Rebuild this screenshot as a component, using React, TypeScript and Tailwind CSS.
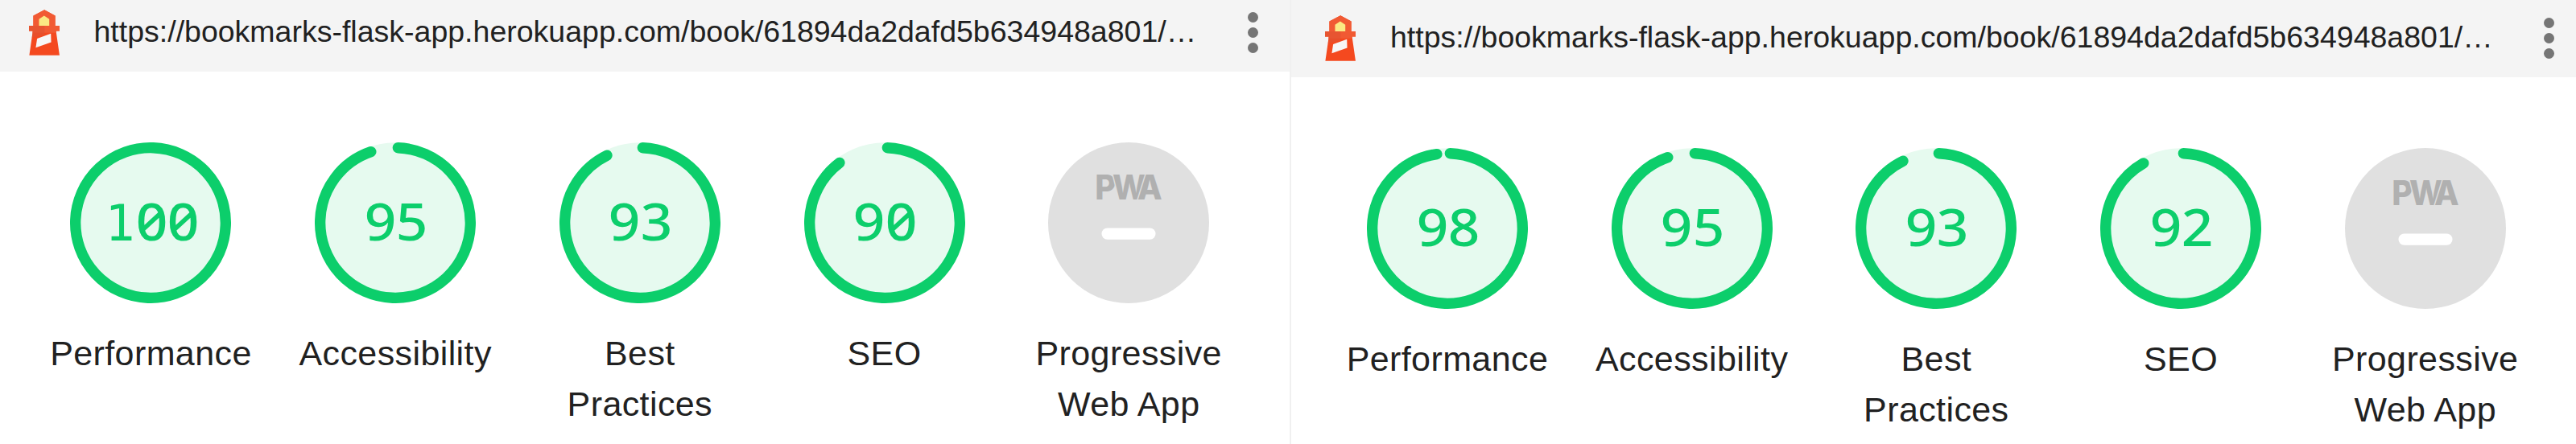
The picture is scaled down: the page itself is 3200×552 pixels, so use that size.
import React from "react";

type Gauge = { score: number | null; label: string[] };

const CIRCUMFERENCE = 2 * Math.PI * 56;

const LEFT: Gauge[] = [
  { score: 100, label: ["Performance"] },
  { score: 95, label: ["Accessibility"] },
  { score: 93, label: ["Best", "Practices"] },
  { score: 90, label: ["SEO"] },
  { score: null, label: ["Progressive", "Web App"] },
];

const RIGHT: Gauge[] = [
  { score: 98, label: ["Performance"] },
  { score: 95, label: ["Accessibility"] },
  { score: 93, label: ["Best", "Practices"] },
  { score: 92, label: ["SEO"] },
  { score: null, label: ["Progressive", "Web App"] },
];

function LighthouseIcon() {
  return (
    <svg viewBox="47 35 113 170" className="h-[57px] w-[38px] shrink-0">
      <path d="M104 36 63 57V95H47V114H61L48 204H160L147 114H160V95H144V57Z" fill="#f4491f" />
      <path d="M104 36 63 57V95H47V114H61L60 121H148L147 114H160V95H144V57Z" fill="#f15a33" />
      <path d="M47 95H104V130L58 139 61 114H47Z" fill="#e25230" opacity="0.7" />
      <path d="M84 70 103 57 122 70V95H84Z" fill="#fbe983" />
      <path d="M77 142 128 124 129 156 72 176Z" fill="#f7f7f7" />
    </svg>
  );
}

function ScoreDial({ score }: { score: number }) {
  const arc = score === 100 ? CIRCUMFERENCE : (score / 100) * CIRCUMFERENCE - 3.4;
  return (
    <div className="grid size-[200px] place-items-center">
      <svg viewBox="0 0 120 120" className="col-start-1 row-start-1 size-[200px]">
        <circle cx="60" cy="60" r="59.8" fill="#e6faef" />
        <circle
          cx="60"
          cy="60"
          r="56"
          fill="none"
          stroke="#0cce6b"
          strokeWidth="8"
          strokeLinecap="round"
          strokeDasharray={`${arc} ${CIRCUMFERENCE}`}
          transform="rotate(-87.95 60 60)"
        />
      </svg>
      <span className="col-start-1 row-start-1 mb-[4px] ml-[2px] flex h-[70px] items-baseline font-['Noto_Sans',sans-serif] text-[63px] leading-[70px] font-medium text-[#0cce6b] [font-feature-settings:'zero'_1]">
        {String(score)
          .split("")
          .map((digit, i) => (
            <span
              key={i}
              className={
                digit === "1"
                  ? "w-[39.4px] text-center font-['DejaVu_Sans_Mono',monospace] text-[61.5px] font-normal"
                  : "w-[39.4px] scale-x-110 text-center"
              }
            >
              {digit}
            </span>
          ))}
      </span>
    </div>
  );
}

function PwaDial() {
  return (
    <svg viewBox="0 0 200 200" className="size-[200px]">
      <circle cx="100" cy="100" r="100" fill="#e0e0e0" />
      <text
        x="56.5 79.5 112"
        y="71"
        className="font-['Inter',sans-serif] font-extrabold"
        fontSize="42"
        fill="#b0b0b0"
        stroke="#e0e0e0"
        strokeWidth="3"
        paintOrder="stroke"
        transform="translate(4.5 0) scale(0.95 1)"
      >
        PWA
      </text>
      <rect x="66.5" y="106.5" width="67" height="14.3" rx="7" fill="#fff" />
    </svg>
  );
}

function Report({ gauges, inset }: { gauges: Gauge[]; inset?: boolean }) {
  return (
    <div className={inset ? "pl-[6.5px]" : ""}>
      <header
        className={
          inset
            ? "-ml-[6.5px] flex h-[89px] items-start bg-[#f4f4f4] pt-[12px] pl-[42px]"
            : "flex h-[89px] items-start bg-[#f4f4f4] pt-[12px] pl-[35.5px]"
        }
      >
        <LighthouseIcon />
        <div className="ml-[43px] w-[1399px] pt-[5px] font-['Liberation_Sans',Arial,sans-serif] text-[37.5px] leading-[44px] whitespace-nowrap text-[#212121]">
          https://bookmarks-flask-app.herokuapp.com/book/61894da2dafd5b634948a801/…
        </div>
        <div className="ml-[34px] flex flex-col gap-[6px] pt-[2.5px]">
          <i className="size-[13px] rounded-full bg-[#757575]" />
          <i className="size-[13px] rounded-full bg-[#757575]" />
          <i className="size-[13px] rounded-full bg-[#757575]" />
        </div>
      </header>
      <main className="flex pt-[88px] pl-[35.6px]">
        {gauges.map((g) => (
          <section key={g.label[0]} className="flex w-[303.7px] shrink-0 flex-col items-center">
            {g.score === null ? <PwaDial /> : <ScoreDial score={g.score} />}
            <h2 className="mt-[31px] text-center font-['Liberation_Sans',Arial,sans-serif] text-[43px] leading-[62.5px] tracking-[0.4px] whitespace-nowrap text-[#212121]">
              {g.label.map((line) => (
                <span key={line} className="block">
                  {line}
                </span>
              ))}
            </h2>
          </section>
        ))}
      </main>
    </div>
  );
}

export default function App() {
  return (
    <div className="flex h-[552px] w-[3200px] overflow-hidden bg-white">
      <div className="w-[1602px] shrink-0">
        <Report gauges={LEFT} />
      </div>
      <div className="w-[1598px] shrink-0 overflow-hidden border-l-2 border-[#f0f0f0]">
        <div className="h-[7px] bg-[#f4f4f4]" />
        <Report gauges={RIGHT} inset />
      </div>
    </div>
  );
}
